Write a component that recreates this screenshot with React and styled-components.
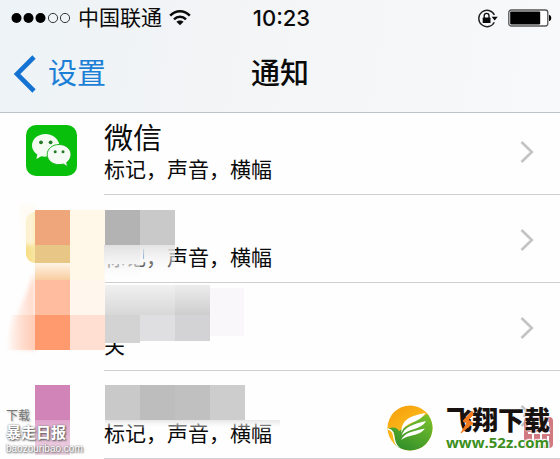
import React from 'react';
import styled, { createGlobalStyle } from 'styled-components';

const GlobalStyle = createGlobalStyle`
  * {
    box-sizing: border-box;
  }
  body {
    margin: 0;
    background: #fefefe;
    color: #0a0a0a;
    font-family: 'Inter', 'Noto Sans CJK SC', sans-serif;
  }
`;

const Page = styled.div`
  position: relative;
  min-height: 100vh;
  overflow: hidden;
`;

const Header = styled.header`
  position: relative;
  z-index: 1;
  background: linear-gradient(100deg, #edf3f7 0%, #f2f4f6 35%, #f8f9fb 100%);
  border-bottom: 1px solid #b9c3cb;
`;

const StatusBar = styled.div`
  display: grid;
  grid-template-columns: 1fr auto 1fr;
  align-items: center;
  height: 36px;
  padding: 0 8px 0 11px;
`;

const StatusGroup = styled.div`
  display: flex;
  align-items: center;
  justify-content: ${(props) => (props.$end ? 'flex-end' : 'flex-start')};
  gap: ${(props) => (props.$end ? '10px' : '7px')};
`;

const Carrier = styled.span`
  font-size: 21px;
  line-height: 24px;
`;

const Clock = styled.time`
  font-size: 22px;
  font-weight: 500;
  line-height: 24px;
`;

const NavBar = styled.nav`
  display: grid;
  grid-template-columns: 1fr auto 1fr;
  align-items: center;
  height: 76px;
  padding: 0 13px;
`;

const BackLink = styled.a`
  display: flex;
  align-items: center;
  gap: 12px;
  color: #1c7fd6;
  font-size: 29px;
  line-height: 36px;
  text-decoration: none;
`;

const Title = styled.h1`
  margin: 0;
  font-size: 29px;
  font-weight: 500;
  line-height: 36px;
`;

// The list is scrolled a little way under the header
const List = styled.ul`
  position: relative;
  margin: -6px 0 0;
  padding: 0;
  list-style: none;
`;

const Row = styled.li`
  display: flex;
  padding-left: 26px;
`;

const RowIcon = styled.div`
  display: flex;
  align-items: center;
  width: 78px;
  height: 86px;
`;

const RowLink = styled.a`
  display: flex;
  flex: 1;
  align-items: center;
  justify-content: space-between;
  height: 88px;
  padding: 2px 26px 0 0;
  border-bottom: 1px solid #cfcfd1;
  color: inherit;
  text-decoration: none;
`;

const AppName = styled.div`
  height: 36px;
  font-size: 29px;
  line-height: 36px;
`;

const AppDetail = styled.div`
  font-size: 21px;
  line-height: 26px;
`;

const Mosaic = styled.svg`
  position: absolute;
  top: 0;
  left: 0;
  pointer-events: none;
`;

const PaperMark = styled.div`
  position: absolute;
  bottom: 4px;
  left: 6px;
  color: #fff;
  text-shadow: 1px 1px 2px #555, 0 0 2px #777;
`;

const PaperHint = styled.div`
  color: #777;
  font-size: 12px;
  line-height: 14px;
  text-shadow: 1px 1px 2px #aaa;
`;

const PaperName = styled.div`
  font-size: 15px;
  font-weight: 700;
  line-height: 20px;
`;

const PaperUrl = styled.div`
  font-family: 'Liberation Sans', sans-serif;
  font-size: 10px;
  line-height: 12px;
`;

const SiteMark = styled.div`
  position: absolute;
  right: 10px;
  bottom: 8px;
  display: flex;
  align-items: center;
  gap: 13px;
`;

const SiteText = styled.div`
  position: relative;
`;

const SiteName = styled.div`
  position: relative;
  color: #17120f;
  font-size: 26px;
  font-weight: 900;
  line-height: 28px;
  text-shadow: 0 0 2px #fff, 0 0 2px #fff;
`;

const SiteUrl = styled.div`
  position: relative;
  color: #3c8f1d;
  font-family: 'Open Sans', sans-serif;
  font-size: 15px;
  font-weight: 700;
  line-height: 15px;
  text-shadow: 0 0 2px #fff, 0 0 2px #fff, 0 0 2px #fff, 0 0 1px #fff, 1px 1px 1px #fff, -1px -1px 1px #fff;
`;

const Stamp = styled.svg`
  position: absolute;
  right: -5px;
  bottom: 0;
`;

const Bolt = styled.svg`
  position: absolute;
  top: 3px;
  left: 14px;
`;

const SignalDots = () => (
  <svg width="60" height="12" viewBox="0 0 60 12" aria-hidden="true">
    <circle cx="5.5" cy="6" r="5" />
    <circle cx="17.5" cy="6" r="5" />
    <circle cx="29.5" cy="6" r="5" />
    <circle cx="42" cy="6" r="4.6" fill="none" stroke="#222" strokeWidth="0.9" />
    <circle cx="54" cy="6" r="4.6" fill="none" stroke="#222" strokeWidth="0.9" />
  </svg>
);

const WifiIcon = () => (
  <svg width="22" height="16" viewBox="0 0 22 16" fill="none" stroke="#0a0a0a" strokeWidth="2.5" aria-hidden="true">
    <path d="M1.2 5.6 C6.8 -0.2 15.2 -0.2 20.8 5.6" />
    <path d="M5 9.3 C8.4 5.9 13.6 5.9 17 9.3" />
    <path d="M11 15.2 L7.4 11.8 C9.5 9.9 12.5 9.9 14.6 11.8 Z" fill="#0a0a0a" stroke="none" />
  </svg>
);

const LockIcon = () => (
  <svg width="21" height="19" viewBox="0 0 21 19" fill="none" aria-hidden="true">
    <path d="M17.3 13.2 A8.2 8.2 0 1 1 17.4 6" stroke="#222" strokeWidth="1.4" />
    <path d="M14.6 7.7 H20.8 L17.7 11.5 Z" fill="#0a0a0a" />
    <rect x="5.7" y="8.6" width="7.8" height="5.4" rx="0.6" fill="#0a0a0a" />
    <path d="M7.2 9 V6.8 A2.4 2.4 0 0 1 12 6.8 V9" stroke="#0a0a0a" strokeWidth="1.3" />
  </svg>
);

const BatteryIcon = () => (
  <svg width="44" height="18" viewBox="0 0 44 18" aria-hidden="true">
    <rect x="0.8" y="1" width="39" height="16" rx="2.5" fill="#fff" stroke="#555" strokeWidth="1.3" />
    <rect x="2.2" y="2.6" width="30" height="12.8" rx="0.8" />
    <path d="M41 6 C44 6.2 44 11.8 41 12 Z" />
  </svg>
);

const BackIcon = () => (
  <svg width="23" height="38" viewBox="0 0 23 38" fill="none" aria-hidden="true">
    <path d="M21 2 L4 19 L21 36" stroke="#1473d2" strokeWidth="4.6" />
  </svg>
);

const Chevron = () => (
  <svg width="14" height="24" viewBox="0 0 14 24" fill="none" aria-hidden="true">
    <path d="M1.5 2 L11.8 12 L1.5 22" stroke="#c4c4c6" strokeWidth="2.6" />
  </svg>
);

const WeChatIcon = () => (
  <svg width="51" height="51" viewBox="0 0 51 51" aria-hidden="true">
    <rect width="51" height="51" rx="10" fill="#08c00b" />
    <path
      d="M19.5 9 C11.8 9 6 14 6 20.5 C6 24.2 8 27.4 11.3 29.4 L10.4 34 L15.3 31.2 C17 31.6 18.8 31.8 20.6 31.6 L33.5 21 C33 14 27 9 19.5 9 Z"
      fill="#f4fbf1"
    />
    <path
      d="M33 19.5 C39.8 19.5 45 24 45 29.5 C45 32.8 43.3 35.6 40.7 37.5 L41.5 41.6 L37.2 39 C35.9 39.4 34.5 39.6 33 39.6 C26.2 39.6 21.2 35.1 21.2 29.5 C21.2 24 26.2 19.5 33 19.5 Z"
      fill="#f7fbf5"
      stroke="#1bb51d"
      strokeWidth="1"
    />
    <g fill="#247b27">
      <circle cx="15" cy="17.3" r="1.9" />
      <circle cx="24.6" cy="17.3" r="1.9" />
      <circle cx="29.2" cy="26.8" r="1.5" />
      <circle cx="37" cy="26.8" r="1.5" />
    </g>
  </svg>
);

// x, y, width, height, fill
const blocks = [
  [35, 210, 35, 35, '#f0a67b'],
  [35, 245, 35, 18, '#e7c686'],
  [35, 263, 35, 17, 'url(#peachUp)'],
  [70, 210, 35, 70, '#fff8e8'],
  [105, 210, 35, 35, '#b3b3b3'],
  [140, 210, 35, 35, '#c9c9ca'],
  [104, 245, 36, 33, 'url(#greyDown)'],
  [140, 245, 35, 33, 'url(#greyAway)'],
  [35, 280, 35, 35, '#ffbc9e'],
  [35, 315, 35, 35, '#ff9a6e'],
  [70, 280, 35, 35, '#fff6ed'],
  [70, 315, 35, 35, '#ffdfd2'],
  [105, 285, 35, 30, 'url(#paleIn)'],
  [140, 285, 35, 30, 'url(#paleIn)'],
  [175, 285, 35, 30, 'url(#darkIn)'],
  [105, 315, 35, 28, '#d3d3d3'],
  [140, 315, 35, 26, '#dfdfe1'],
  [175, 315, 35, 26, '#d3d3d5'],
  [210, 288, 34, 48, '#f9f7f9'],
  [35, 385, 35, 35, '#d184b7'],
  [35, 420, 35, 35, 'url(#pinkDown)'],
  [105, 385, 35, 35, '#c9c9ca'],
  [140, 385, 35, 35, '#bdbdbe'],
  [175, 385, 35, 35, '#c0c0c1'],
  [210, 385, 35, 35, '#cdcdce'],
  [105, 420, 70, 8, 'url(#greyEdge)'],
  [175, 420, 105, 9, 'url(#greyEdge)'],
];

const fades = [
  ['peachUp', '#fff4e6', 1, '#f8cda0', 1],
  ['greyDown', '#e0e0e0', 1, '#ffffff', 0.5],
  ['greyAway', '#e4e4e4', 1, '#ffffff', 0],
  ['greyEdge', '#e4e4e4', 0.9, '#ffffff', 0.2],
  ['paleIn', '#f0f0f0', 1, '#d8d8d8', 1],
  ['darkIn', '#ececec', 1, '#cecece', 1],
  ['pinkDown', '#dfa3cb', 1, '#efd4e4', 0.9],
];

const HiddenApps = () => (
  <Mosaic width="280" height="352" viewBox="0 107 280 352" aria-hidden="true">
    <defs>
      {fades.map(([id, from, fromAlpha, to, toAlpha]) => (
        <linearGradient key={id} id={id} x1="0" y1="0" x2="0" y2="1">
          <stop offset="0" stopColor={from} stopOpacity={fromAlpha} />
          <stop offset="1" stopColor={to} stopOpacity={toAlpha} />
        </linearGradient>
      ))}
      <linearGradient id="yellowEdge">
        <stop offset="0" stopColor="#f3cf4f" />
        <stop offset="0.5" stopColor="#fbe9b4" />
      </linearGradient>
      <linearGradient id="peachEdge">
        <stop offset="0.1" stopColor="#ffd9c8" stopOpacity="0" />
        <stop offset="1" stopColor="#ffcdb8" />
      </linearGradient>
      <filter id="soft" x="-20%" y="-20%" width="140%" height="140%">
        <feGaussianBlur stdDeviation="2" />
      </filter>
    </defs>
    <rect x="26" y="212" width="40" height="51" rx="9" fill="url(#yellowEdge)" opacity="0.7" />
    <path d="M20 205 H35 V245 H24 Z" fill="#fffaf0" opacity="0.7" filter="url(#soft)" />
    <path d="M35 272 L3 350 H35 Z" fill="url(#peachEdge)" filter="url(#soft)" opacity="0.8" />
    <path d="M12 315 H35 V350 H3 Z" fill="url(#peachEdge)" />
    <rect x="103" y="244" width="40" height="20" fill="#fff" />
    {blocks.map(([x, y, width, height, fill]) => (
      <rect key={`${x}-${y}`} x={x} y={y} width={width} height={height} fill={fill} />
    ))}
  </Mosaic>
);

const BirdLogo = () => (
  <svg width="46" height="46" viewBox="0 0 46 46" aria-hidden="true">
    <defs>
      <linearGradient id="sun" x1="0" y1="0" x2="0.6" y2="1">
        <stop offset="0" stopColor="#f59a08" />
        <stop offset="1" stopColor="#ffd02c" />
      </linearGradient>
      <linearGradient id="leaf" x1="1" y1="0" x2="0.4" y2="1">
        <stop offset="0" stopColor="#7fc42c" />
        <stop offset="1" stopColor="#33912a" />
      </linearGradient>
      <clipPath id="disc">
        <circle cx="23" cy="23" r="22.5" />
      </clipPath>
    </defs>
    <g clipPath="url(#disc)">
      <rect width="46" height="46" fill="url(#sun)" />
      <path
        d="M46 12 V46 H12 C8 41 8 36 7.5 31 C7 27 5 25 1 24 C5 21.5 10 22 12 26 L40 9 Z"
        fill="url(#leaf)"
      />
      <path d="M14.5 28 C14 16 21 11 38.5 8 C35 14 29 16 24 18 C18.5 20.5 16 23 14.5 28 Z" fill="#fff" />
      <path d="M14.5 31 C17 22 25 19.5 39 16 C36 21.5 30 23 25 24.8 C19 27 16.5 28.5 14.5 31 Z" fill="#fff" />
      <path d="M14 35 C18 27.5 25 26.5 38 23.5 C34 29 28 29.5 23 31 C19 32 16.5 33 14 35 Z" fill="#fff" />
      <path d="M1 24 C6 25 6.5 29 7 33 C8 39 11 43 15 45" fill="none" stroke="#fff" strokeWidth="1.4" />
    </g>
  </svg>
);

const StampMark = () => (
  <Stamp width="34" height="42" viewBox="0 0 34 42" aria-hidden="true">
    <path d="M3 9 L6 2 L9 7" fill="none" stroke="#bbb" strokeWidth="2.5" />
    <rect x="3" y="9" width="29" height="31" rx="4" fill="#c9616a" opacity="0.85" />
    <path
      d="M7 14 H25 M7 18 H22 M7 25 H29 M7 36 H24 M12 12 V38 M20 12 V37 M27 14 V24 M27 28 V33"
      stroke="#fff"
      strokeWidth="2"
    />
  </Stamp>
);

const apps = [
  { id: 1, name: '微信', detail: '标记，声音，横幅', icon: <WeChatIcon /> },
  { id: 2, detail: '标记，声音，横幅' },
  { id: 3, detail: '关' },
  { id: 4, detail: '标记，声音，横幅' },
];

const App = () => {
  return (
    <Page lang="zh-CN">
      <GlobalStyle />
      <Header>
        <StatusBar>
          <StatusGroup>
            <SignalDots />
            <Carrier>中国联通</Carrier>
            <WifiIcon />
          </StatusGroup>
          <Clock>10:23</Clock>
          <StatusGroup $end>
            <LockIcon />
            <BatteryIcon />
          </StatusGroup>
        </StatusBar>
        <NavBar>
          <BackLink href="#settings">
            <BackIcon />
            设置
          </BackLink>
          <Title>通知</Title>
        </NavBar>
      </Header>
      <List>
        {apps.map((app) => (
          <Row key={app.id}>
            <RowIcon>{app.icon}</RowIcon>
            <RowLink href={`#app-${app.id}`}>
              <div>
                <AppName>{app.name}</AppName>
                <AppDetail>{app.detail}</AppDetail>
              </div>
              <Chevron />
            </RowLink>
          </Row>
        ))}
        <HiddenApps />
      </List>
      <PaperMark>
        <PaperHint>下载</PaperHint>
        <PaperName>暴走日报</PaperName>
        <PaperUrl>baozouribao.com</PaperUrl>
      </PaperMark>
      <SiteMark>
        <BirdLogo />
        <SiteText>
          <StampMark />
          <SiteName>飞翔下载</SiteName>
          <Bolt width="14" height="24" viewBox="0 0 14 24" aria-hidden="true">
            <path
              d="M12 1 L3 11 L7 13 L1 23 L13 13 L8 10 L13 5 Z"
              fill="#f47a1c"
              stroke="#f47a1c"
              strokeWidth="1"
            />
          </Bolt>
          <SiteUrl>www.52z.com</SiteUrl>
        </SiteText>
      </SiteMark>
    </Page>
  );
};

export default App;
